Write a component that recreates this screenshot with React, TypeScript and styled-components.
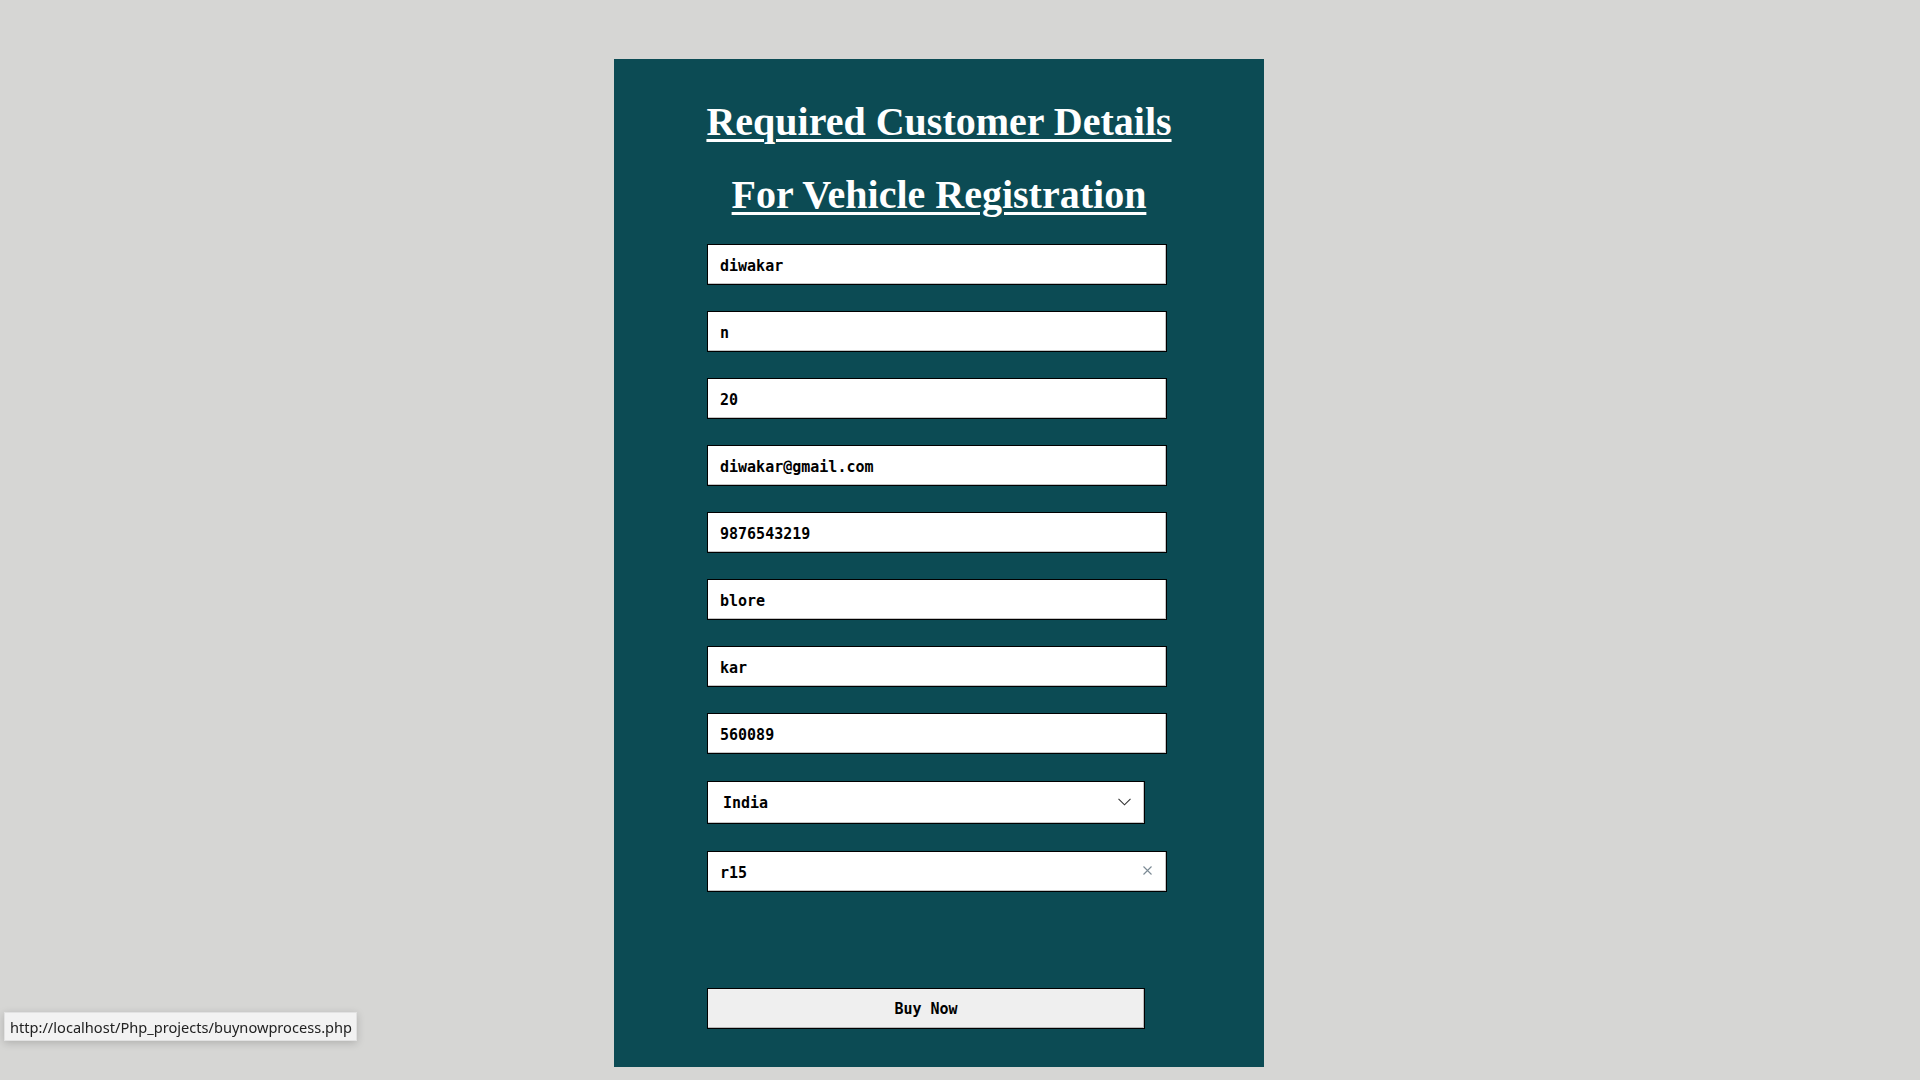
import React, { useEffect, useRef } from "react";
import styled, { createGlobalStyle } from "styled-components";

const GlobalStyle = createGlobalStyle`
  html, body {
    margin: 0;
    padding: 0;
    background: #d6d6d4;
  }
  body {
    min-height: 1080px;
    font-family: "DejaVu Sans Mono", "Liberation Mono", monospace;
  }
`;

const Page = styled.div`
  display: flex;
  padding: 59px 0 0 614px;
`;

const Panel = styled.main`
  width: 650px;
  box-sizing: border-box;
  background: #0c4b54;
  padding: 40px 0 38px 93px;
  display: flex;
  flex-direction: column;
`;

const TitleBlock = styled.header`
  display: flex;
  flex-direction: column;
  align-items: center;
  gap: 27px;
  margin: 0 0 26px -93px;
`;

const Title = styled.h1`
  margin: 0;
  font-family: "Liberation Serif", "Times New Roman", serif;
  font-weight: 700;
  font-size: 40px;
  line-height: 46px;
  color: #ffffff;
  text-decoration: underline;
  text-decoration-thickness: 3px;
  text-underline-offset: 4px;
  white-space: nowrap;
`;

const Form = styled.form`
  display: flex;
  flex-direction: column;
  gap: 26px;
`;

const fieldFont = `
  font-family: "DejaVu Sans Mono", "Liberation Mono", monospace;
  font-weight: 700;
  font-size: 15px;
  color: #000;
`;

const Input = styled.input`
  ${fieldFont}
  box-sizing: border-box;
  width: 460px;
  height: 41px;
  margin: 0;
  padding: 2px 12px 0;
  background: #fff;
  border: 1px solid #000;
  box-shadow: inset -1px -1px 0 #c4c4c4;
  border-radius: 0;
  outline: none;
  caret-color: #000;
`;

const FieldWrap = styled.div<{ $width: number; $gapFix?: number }>`
  position: relative;
  width: ${(p) => p.$width}px;
  margin-top: ${(p) => p.$gapFix ?? 0}px;
`;

const Select = styled.select`
  ${fieldFont}
  box-sizing: border-box;
  appearance: none;
  width: 438px;
  height: 43px;
  margin: 0;
  padding: 1px 14px 0 15px;
  background: #fff;
  border: 1px solid #000;
  box-shadow: inset -1px -1px 0 #c4c4c4;
  border-radius: 0;
  outline: none;
  display: block;
`;

const Chevron = styled.svg`
  position: absolute;
  right: 14px;
  top: 17px;
  width: 13px;
  height: 8px;
  pointer-events: none;
`;

const ClearButton = styled.button`
  position: absolute;
  right: 14px;
  top: 14px;
  width: 11px;
  height: 11px;
  padding: 0;
  margin: 0;
  border: 0;
  background: transparent;
  display: flex;
  align-items: center;
  justify-content: center;
  cursor: pointer;
`;

const BuyButton = styled.button`
  ${fieldFont}
  box-sizing: border-box;
  width: 438px;
  height: 41px;
  margin: 70px 0 0 0;
  padding: 1px 0 0;
  background: #efefef;
  border: 1px solid #000;
  box-shadow: inset -1px -1px 0 #b8b8b8;
  border-radius: 0;
  cursor: pointer;
`;

const StatusBar = styled.div`
  position: fixed;
  left: 4px;
  top: 1012px;
  height: 29px;
  box-sizing: border-box;
  padding: 0 4px 0 5px;
  display: flex;
  align-items: center;
  background: #f2f2f2;
  border: 1px solid #e2e2e2;
  box-shadow: 0 2px 8px rgba(0, 0, 0, 0.18);
  font-family: "Noto Sans", "Open Sans", sans-serif;
  font-size: 14.6px;
  color: #222;
  white-space: nowrap;
`;

const fields = [
  "diwakar",
  "n",
  "20",
  "diwakar@gmail.com",
  "9876543219",
  "blore",
  "kar",
  "560089",
];

export default function App() {
  const modelRef = useRef<HTMLInputElement>(null);

  useEffect(() => {
    const el = modelRef.current;
    if (el) {
      el.focus();
      el.setSelectionRange(3, 3);
    }
  }, []);

  return (
    <>
      <GlobalStyle />
      <Page>
        <Panel>
          <TitleBlock>
            <Title>Required Customer Details</Title>
            <Title>For Vehicle Registration</Title>
          </TitleBlock>
          <Form onSubmit={(e) => e.preventDefault()}>
            {fields.map((v, i) => (
              <Input key={i} type="text" defaultValue={v} />
            ))}
            <FieldWrap $width={438} $gapFix={1}>
              <Select defaultValue="India">
                <option value="India">India</option>
              </Select>
              <Chevron viewBox="0 0 13 8" aria-hidden="true">
                <path d="M0.5 0.8 L6.5 6.8 L12.5 0.8" fill="none" stroke="#333" strokeWidth="1.1" />
              </Chevron>
            </FieldWrap>
            <FieldWrap $width={460} $gapFix={1}>
              <Input ref={modelRef} type="text" defaultValue="r15" />
              <ClearButton type="button" aria-label="clear">
                <svg width="9" height="9" viewBox="0 0 9 9" aria-hidden="true">
                  <path d="M0.5 0.5 L8.5 8.5 M8.5 0.5 L0.5 8.5" stroke="#7b8a94" strokeWidth="1.1" />
                </svg>
              </ClearButton>
            </FieldWrap>
            <BuyButton type="submit">Buy Now</BuyButton>
          </Form>
        </Panel>
      </Page>
      <StatusBar>http://localhost/Php_projects/buynowprocess.php</StatusBar>
    </>
  );
}
